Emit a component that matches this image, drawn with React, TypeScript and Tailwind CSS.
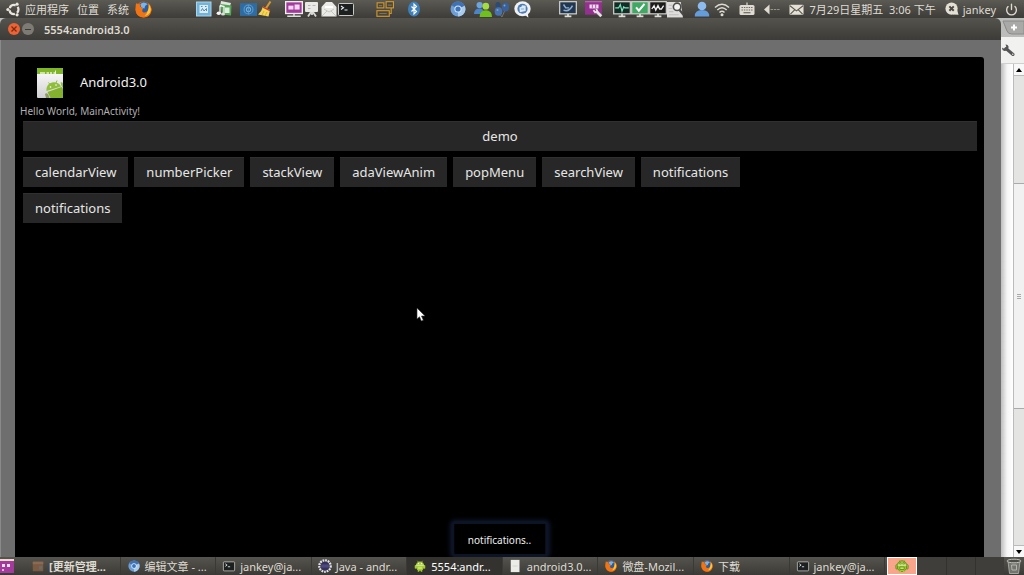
import type { ReactNode } from "react";
import { Power } from "lucide-react";

function Icon({ children, className = "h-4 w-4" }: { children: ReactNode; className?: string }) {
  return (
    <svg viewBox="0 0 16 16" className={`shrink-0 ${className}`} aria-hidden="true">
      {children}
    </svg>
  );
}

function UbuntuIcon() {
  return (
    <Icon className="h-[15px] w-[15px]">
      <circle cx="8.5" cy="8" r="4.8" fill="none" stroke="#e9e5dc" strokeWidth="2.4" strokeDasharray="7.6 2.45" strokeDashoffset="-6.3" />
      <circle cx="2" cy="8" r="1.7" fill="#e9e5dc" />
      <circle cx="11.8" cy="2.3" r="1.7" fill="#e9e5dc" />
      <circle cx="11.8" cy="13.7" r="1.7" fill="#e9e5dc" />
    </Icon>
  );
}

function FirefoxIcon({ className }: { className?: string }) {
  return (
    <Icon className={className}>
      <circle cx="8" cy="8" r="7.6" fill="#e66000" />
      <circle cx="8.4" cy="6.2" r="5.4" fill="#2c5c9e" />
      <path d="M5 3 Q8 0 12 3 Q9 4 9 7 L6 6 Z" fill="#7fb4e0" />
      <path d="M1 2 Q3 3 5 3 Q4 5 6 6 L8 7 Q6 8 7 10 Q10 12 12 9 Q14 6 12 2 Q16 5 15.5 9 Q14 15.6 8 15.6 Q1 15 .5 8 Q.5 4 1 2Z" fill="#ee7415" />
      <path d="M13 3 Q16 7 14 11 Q12 14 9 14 Q13 11 13 3Z" fill="#ffc83a" />
    </Icon>
  );
}

function ChromiumIcon({ className }: { className?: string }) {
  return (
    <Icon className={className}>
      <circle cx="8" cy="8" r="7.5" fill="#6d9fd6" />
      <path d="M8 8 L1.5 4.3 A7.5 7.5 0 0 1 14.7 4.8Z" fill="#3f72b4" />
      <path d="M8 8 L14.7 4.8 A7.5 7.5 0 0 1 8 15.5Z" fill="#a9cbed" />
      <circle cx="8" cy="8" r="3.6" fill="#dbe9f8" />
      <circle cx="8" cy="8" r="2.6" fill="#3c74bb" />
    </Icon>
  );
}

function TerminalIcon({ className }: { className?: string }) {
  return (
    <Icon className={className}>
      <rect x=".5" y="2.5" width="15" height="12" rx="1" fill="#1d2021" stroke="#c9c9c4" />
      <path d="M3 5 L5.5 6.8 L3 8.5 M6.5 9 H9.5" fill="none" stroke="#eee" strokeWidth="1.1" />
    </Icon>
  );
}

function AndroidIcon({ className }: { className?: string }) {
  return (
    <Icon className={className}>
      <path d="M4.5 1 L6 3 M11.5 1 L10 3" stroke="#8fbf2a" />
      <ellipse cx="8" cy="8.2" rx="5.6" ry="6.2" fill="#a4cc35" />
      <rect x="1" y="6.5" width="2" height="5" rx="1" fill="#a4cc35" />
      <rect x="13" y="6.5" width="2" height="5" rx="1" fill="#a4cc35" />
      <path d="M6 13 V15.5 M10 13 V15.5" stroke="#a4cc35" strokeWidth="2" />
      <path d="M3 7 H13" stroke="#f0f7dc" />
      <circle cx="6" cy="4.8" r=".9" fill="#fff" />
      <circle cx="10" cy="4.8" r=".9" fill="#fff" />
      <path d="M5.5 9 H10.5 V12 H5.5Z" fill="#c5e267" />
    </Icon>
  );
}

function WidgetIcon() {
  return (
    <Icon>
      <rect x=".5" y="1" width="14.5" height="14" fill="#73b4da" stroke="#a8d5ec" />
      <rect x="3.5" y="4" width="8.5" height="8" fill="#dcecf5" />
      <path d="M5 10 L6.5 7.5 L8 10 L10.5 7.5 V10 M5 5.5 H6.5 M9 5.5 H10.5" fill="none" stroke="#4d8fba" />
    </Icon>
  );
}

function MediaIcon() {
  return (
    <Icon>
      <path d="M5 0 L15 2 L14 5 L4 6Z" fill="#dfe6e0" />
      <path d="M4.5 3 L15.5 4.5 L15 14.5 L6 13.5Z" fill="#54a657" />
      <path d="M9 6.5 H13.5 V12 H9Z" fill="#dff0e0" />
      <path d="M4 4.5 V12 M4 4.5 L8 5.5 V12" fill="none" stroke="#f5f5f5" strokeWidth="1.3" />
      <ellipse cx="2.8" cy="12.3" rx="2.2" ry="1.7" fill="#f5f5f5" />
      <ellipse cx="7" cy="13" rx="2" ry="1.6" fill="#dcdcdc" />
    </Icon>
  );
}

function GlobeFlagIcon() {
  return (
    <Icon className="h-[17px] w-[17px]">
      <rect x="0" y="2" width="16" height="12" fill="#2e6da4" />
      <circle cx="8" cy="8" r="4.2" fill="none" stroke="#5f9bcd" />
      <circle cx="8" cy="8" r="2" fill="none" stroke="#79aedb" />
      <path d="M8 3.5 V12.5" stroke="#5f9bcd" strokeWidth=".7" />
    </Icon>
  );
}

function BroomIcon() {
  return (
    <Icon>
      <path d="M13.5 .5 L8.5 8" stroke="#d59a2f" strokeWidth="2" />
      <path d="M6 5.5 L13 9 L11.5 15.5 L1 13.5 Q5 10 6 5.5Z" fill="#f4d657" />
      <path d="M6 6.2 L13 9.7" stroke="#cf3b24" strokeWidth="1.5" />
      <path d="M7 10 L5 14 M10 11 L8 15" stroke="#c79c20" strokeWidth=".7" />
    </Icon>
  );
}

function PinkMonitorIcon() {
  return (
    <Icon className="h-[18px] w-[18px]">
      <rect x=".6" y="1.5" width="14.8" height="10.5" fill="#a23a9b" stroke="#eee" strokeWidth="1.2" />
      <rect x="3" y="5" width="4.5" height="3.5" fill="#f4d4f1" />
      <rect x="8.5" y="4" width="4.5" height="4.5" fill="#f4d4f1" />
      <path d="M8 12 V14.5 M2 14.5 H14" stroke="#dcdcdc" strokeWidth="1.3" />
    </Icon>
  );
}

function BoardIcon() {
  return (
    <Icon>
      <rect x="1" y="1" width="13" height="10" rx="1" fill="#e8e8e6" />
      <path d="M4 4.5 H6.5 M8.5 4.5 H11.5 M4 7.5 H6.5" stroke="#b5b5b1" strokeWidth="1.2" />
      <path d="M8 11 V14 M7 11 L4 15.5 M9 11 L12 15.5" stroke="#d6d6d3" strokeWidth="1.8" />
    </Icon>
  );
}

function OpenMailIcon() {
  return (
    <Icon>
      <path d="M.5 6 L5 1 H11 L15.5 6 V15.5 H.5Z" fill="#e9e9e6" />
      <path d="M3 8 L8 11 L13 8 M1 15 L6 10 M15 15 L10 10" fill="none" stroke="#c6c6c1" />
      <path d="M4 6 H12" stroke="#fff" strokeWidth="2" />
    </Icon>
  );
}

function BoxesIcon() {
  return (
    <Icon className="h-[18px] w-[18px]">
      <g fill="#4a453a" stroke="#d0982e">
        <rect x="1" y="2.5" width="6" height="4.5" />
        <rect x="9" y="1.5" width="6.5" height="5.5" />
        <rect x=".8" y="9.5" width="11" height="5" />
      </g>
      <path d="M13.5 7 V12 H12" fill="none" stroke="#d0982e" />
      <path d="M3 12 H9.5 M2.5 5 H5.5 M10.5 4.5 H14" stroke="#77736a" />
    </Icon>
  );
}

function BluetoothIcon() {
  return (
    <Icon>
      <ellipse cx="8" cy="8" rx="6" ry="7.6" fill="#3f80bb" />
      <path d="M5.5 5.5 L10.5 10.5 L8 13 V3 L10.5 5.5 L5.5 10.5" fill="none" stroke="#fff" strokeWidth="1.1" />
    </Icon>
  );
}

function BuddiesIcon() {
  return (
    <Icon className="h-[18px] w-[18px]">
      <circle cx="5" cy="4.5" r="2.8" fill="#6fa3dc" />
      <path d="M0 12.5 Q0 7.5 5 7.5 Q9 7.5 9 12.5Z" fill="#4b84c8" />
      <circle cx="10.5" cy="5.5" r="3" fill="#a2dd42" />
      <path d="M5 15 Q5 9 10.5 9 Q16 9 16 15Z" fill="#6fbf1d" />
    </Icon>
  );
}

function BalloonsIcon() {
  return (
    <Icon>
      <path d="M5 12 L8 16 M11 9 L8 16" stroke="#888" strokeWidth=".7" />
      <ellipse cx="4" cy="4" rx="2.5" ry="3" fill="#2d4a74" />
      <ellipse cx="11.5" cy="6" rx="3.6" ry="4.5" fill="#3a6099" />
      <ellipse cx="4.5" cy="10.5" rx="3.8" ry="4.3" fill="#4672ad" />
      <circle cx="10.5" cy="4.5" r="1" fill="#7ba4d6" />
      <circle cx="3.5" cy="9" r="1" fill="#7ba4d6" />
    </Icon>
  );
}

function ChatIcon() {
  return (
    <Icon className="h-[17px] w-[17px]">
      <ellipse cx="8" cy="7.3" rx="7.7" ry="7" fill="#eff1f3" />
      <path d="M9 12 L13.5 15.8 L13 11Z" fill="#eff1f3" />
      <circle cx="8" cy="7.3" r="4.8" fill="#4d7cb3" />
      <path d="M5 6 L7 5.5 L7.5 4 L11 4.5 V9.5 L5.5 10.5Z" fill="#dbe8f6" />
      <path d="M6.5 7.5 H9.5" stroke="#8fafd2" />
    </Icon>
  );
}

function Screen({ fill, children }: { fill: string; children: ReactNode }) {
  return (
    <Icon className="h-[18px] w-[18px]">
      <rect x=".6" y="1.5" width="14.8" height="10.8" fill={fill} stroke="#cfcfcb" strokeWidth="1.1" />
      <path d="M8 12.5 V14.5 M5 14.5 H11" stroke="#dededb" strokeWidth="1.5" />
      {children}
    </Icon>
  );
}

function PurpleToolIcon() {
  return (
    <Icon className="h-[18px] w-[18px]">
      <rect x="0" y="1" width="15" height="12" fill="#94308f" />
      <path d="M0 1.5 H15" stroke="#c069bb" />
      <rect x="4" y="4" width="8" height="3.5" fill="#f2dcf1" />
      <path d="M6.5 4 V7 M9.5 4 V7" stroke="#94308f" strokeWidth=".7" />
      <path d="M10 10 L14.5 14.5" stroke="#e3e3e3" strokeWidth="2.4" />
      <path d="M7.5 9 L9 11 L11 10 L10 8" fill="none" stroke="#e3e3e3" strokeWidth="1.5" />
    </Icon>
  );
}

function SearchDocIcon() {
  return (
    <Icon className="h-[17px] w-[17px]">
      <path d="M0 1 H13 L15 15.5 H0Z" fill="#dedddb" />
      <path d="M1.5 4 H5 M1.5 7 H5 M2 10 H6 M2 13 H11" stroke="#bdbdbb" />
      <circle cx="9.5" cy="5.5" r="3.5" fill="#f4f4f4" stroke="#4d4d4b" strokeWidth="1.5" />
      <path d="M11.8 8.5 L15.5 13" stroke="#474745" strokeWidth="2" />
    </Icon>
  );
}

function UserIcon() {
  return (
    <Icon>
      <circle cx="8" cy="5" r="4.3" fill="#8dbbee" />
      <path d="M.8 15.5 Q.5 9 8 9 Q15.5 9 15.2 15.5Z" fill="#659dda" />
    </Icon>
  );
}

function WifiIcon() {
  return (
    <Icon>
      <g fill="none" stroke="#dfdbd2" strokeWidth="1.5">
        <path d="M1 6.5 Q8 0 15 6.5" />
        <path d="M3.3 9 Q8 4.5 12.7 9" />
        <path d="M5.5 11.5 Q8 9 10.5 11.5" />
      </g>
      <circle cx="8" cy="13.7" r="1.5" fill="#dfdbd2" />
    </Icon>
  );
}

function KeyboardIcon() {
  return (
    <Icon>
      <path d="M8 1.5 V4" stroke="#dfdbd2" strokeWidth="1.2" />
      <rect x=".5" y="4" width="15" height="10" rx="1.5" fill="#dfdbd2" />
      <path d="M2.5 6.5 H13.5 M2.5 9 H13.5" stroke="#6b685f" strokeWidth="1.2" strokeDasharray="1.4 1" />
      <path d="M4.5 11.7 H11.5" stroke="#6b685f" strokeWidth="1.2" />
    </Icon>
  );
}

function SpeakerIcon() {
  return (
    <Icon>
      <path d="M0 8.5 L5.5 3.5 V13.5Z" fill="#dfdbd2" />
      <path d="M6.5 8.5 H16" stroke="#96938b" strokeDasharray="2.5 .8" />
    </Icon>
  );
}

function EnvelopeIcon() {
  return (
    <Icon className="h-[15px] w-[15px]">
      <rect x=".5" y="3" width="15" height="10.5" rx="1" fill="#e4e0d6" />
      <path d="M1 4 L8 9.5 L15 4 M1.5 13 L6 8.5 M14.5 13 L10 8.5" fill="none" stroke="#5a574f" strokeWidth="1.2" />
    </Icon>
  );
}

function StatusIcon() {
  return (
    <Icon className="h-[14px] w-[14px]">
      <circle cx="7.5" cy="7.5" r="7" fill="#e4e0d6" />
      <path d="M9 14.3 L15.5 14.5 L13.5 8Z" fill="#e4e0d6" />
      <path d="M5 5 L10 10 M10 5 L5 10" stroke="#4a4842" strokeWidth="2.2" />
    </Icon>
  );
}

function EclipseIcon() {
  return (
    <Icon className="h-[14px] w-[14px]">
      <circle cx="8" cy="8" r="6.5" fill="none" stroke="#e4e2ee" strokeWidth="2.6" strokeDasharray="2 1" />
      <circle cx="8" cy="8" r="5" fill="#353060" />
      <path d="M3.5 7 H12.5 M3.5 9 H12.5" stroke="#6d67a3" strokeWidth=".8" />
    </Icon>
  );
}

function PageIcon() {
  return (
    <Icon className="h-[14px] w-[14px]">
      <path d="M2 1 H12 V15 H2Z" fill="#ebebe8" />
      <path d="M4 8 H10" stroke="#d0d0cc" />
    </Icon>
  );
}

function PackageIcon() {
  return (
    <Icon className="h-[14px] w-[14px]">
      <rect x="2" y="3" width="12" height="11" rx="1" fill="#7b5a42" />
      <path d="M2 3 H14 V6 H2Z" fill="#8a6a52" />
      <rect x="9" y="8" width="4" height="4" fill="#6f6863" />
    </Icon>
  );
}

function TrashIcon() {
  return (
    <Icon>
      <path d="M2 3 H14 L12.5 15.5 H3.5Z" fill="#74746f" stroke="#a5a5a0" />
      <ellipse cx="8" cy="3" rx="7" ry="1.8" fill="#4c4c48" stroke="#c0c0bb" />
      <path d="M5.5 7 H10.5 V12 H6Z" fill="none" stroke="#b5b5af" />
    </Icon>
  );
}

function AppLogo() {
  return (
    <svg viewBox="0 0 26 30" className="h-[30px] w-[26px] shrink-0" aria-hidden="true">
      <defs>
        <linearGradient id="sheet" x1="0" y1="0" x2="0" y2="1">
          <stop offset="0" stopColor="#ffffff" />
          <stop offset="1" stopColor="#d0d0d0" />
        </linearGradient>
        <clipPath id="sheet-clip">
          <rect width="26" height="30" rx="1" />
        </clipPath>
      </defs>
      <g clipPath="url(#sheet-clip)">
        <rect width="26" height="30" fill="url(#sheet)" />
        <rect width="26" height="6" fill="#7fb629" />
        <path d="M3 5 H8 M9.5 5 H12 M13 5 H15 M16.5 5 H18" stroke="#e9f5d2" strokeWidth="1.6" />
        <path d="M18.5 2.5 V6" stroke="#e9f5d2" />
        <path d="M11.5 14.5 L13.5 17 M20 12.5 L19 15" stroke="#8dbb35" />
        <path d="M9.5 23 Q9 15.5 16 14.3 Q21.5 14 24 18.5Z" fill="#8fbf3a" />
        <path d="M10.5 24 L24.5 19 L26 20.5 V30 H13.5Z" fill="#83b32e" />
        <path d="M23.5 14.5 Q26 13.5 26 16 V20 L24.5 18Z" fill="#8fbf3a" />
        <circle cx="13.5" cy="19" r=".8" fill="#fff" />
        <circle cx="19" cy="17" r=".8" fill="#fff" />
        <path d="M8 26 Q10 24 11.5 27 L12.5 30 H9Z" fill="#8a9a62" />
      </g>
    </svg>
  );
}

function TopPanel() {
  return (
    <header className="flex h-[18px] shrink-0 items-center overflow-hidden bg-linear-to-b from-[#5b5a53] to-[#3d3c38] px-1.5 text-[11px] leading-none text-[#dfdbd2]">
      <nav className="flex items-center gap-2">
        <UbuntuIcon />
        <a href="#apps" className="-ml-1">应用程序</a>
        <a href="#places">位置</a>
        <a href="#system">系统</a>
        <FirefoxIcon className="-ml-0.5 h-[17px] w-[17px]" />
      </nav>
      <div className="ml-11 flex items-center gap-7">
        <div className="flex items-center gap-1">
          <WidgetIcon />
          <MediaIcon />
          <span className="ml-1 flex items-center">
            <GlobeFlagIcon />
            <BroomIcon />
          </span>
          <span className="ml-2 flex items-center gap-px">
            <PinkMonitorIcon />
            <BoardIcon />
            <OpenMailIcon />
            <TerminalIcon />
          </span>
        </div>
        <div className="-ml-1.5 flex items-center gap-3">
          <BoxesIcon />
          <BluetoothIcon />
        </div>
        <div className="flex items-center gap-1">
          <ChromiumIcon />
          <span className="ml-1 flex items-center gap-0.5">
            <BuddiesIcon />
            <BalloonsIcon />
          </span>
          <ChatIcon />
        </div>
        <div className="flex items-center gap-2">
          <Screen fill="#22364f">
            <path d="M4 9 Q9 11 12 5 M4 4 L6 7 H9" fill="none" stroke="#8fb0d2" strokeWidth="1.3" />
          </Screen>
          <PurpleToolIcon />
          <span className="ml-0.5 flex items-center">
            <Screen fill="#142c26">
              <path d="M2 7 H5 L6.5 4 L8 10 L9.5 6 L10.5 7 H14" fill="none" stroke="#7de5bd" />
            </Screen>
            <Screen fill="#3fa863">
              <path d="M4.5 6.5 L7 9.5 L12 3.5" fill="none" stroke="#fff" strokeWidth="1.8" />
            </Screen>
            <Screen fill="#1b1b1a">
              <path d="M2.5 8 L4.5 5 L6 9 L8 5 L9.5 8 H11 L13 5" fill="none" stroke="#efefef" strokeWidth="1.2" />
            </Screen>
            <SearchDocIcon />
          </span>
        </div>
      </div>
      <div className="ml-auto flex items-center gap-[9px]">
        <span className="flex items-center gap-1">
          <UserIcon />
          <WifiIcon />
        </span>
        <KeyboardIcon />
        <SpeakerIcon />
        <span className="flex items-center gap-[5px] whitespace-nowrap">
          <EnvelopeIcon />
          <time>7月29日星期五&nbsp; 3:06 下午</time>
        </span>
        <span className="flex items-center gap-1">
          <StatusIcon />
          jankey
        </span>
        <button type="button" aria-label="Power">
          <Power className="h-[13px] w-[13px]" strokeWidth={2.5} />
        </button>
      </div>
    </header>
  );
}

function TitleBar() {
  return (
    <div className="flex h-[22px] shrink-0 items-center gap-0.5 rounded-t-md bg-linear-to-b from-[#54534d] to-[#3c3b37] px-2 text-[#dfdbd2]">
      <button type="button" aria-label="Close" className="flex h-3 w-3 items-center justify-center rounded-full bg-[#ee6335]">
        <svg viewBox="0 0 8 8" className="h-2 w-2">
          <path d="M1.5 1.5 L6.5 6.5 M6.5 1.5 L1.5 6.5" stroke="#7a2b10" strokeWidth="1.3" />
        </svg>
      </button>
      <button type="button" aria-label="Minimize" className="flex h-3 w-3 items-center justify-center rounded-full bg-[#7d7b74]">
        <span className="h-px w-1.5 bg-[#3c3b37]" />
      </button>
      <h1 className="ml-2 text-[11px] leading-none font-semibold">5554:android3.0</h1>
    </div>
  );
}

function DemoButton({ label, wide = false }: { label: string; wide?: boolean }) {
  return (
    <button
      type="button"
      className={`h-[30px] border-t border-[#303030] bg-[#272727] px-3 text-[13px] leading-none text-[#e6e6e6] ${wide ? "w-full" : ""}`}
    >
      {label}
    </button>
  );
}

const demos = ["calendarView", "numberPicker", "stackView", "adaViewAnim", "popMenu", "searchView", "notifications"];

function EmulatorScreen() {
  return (
    <main className="relative flex-1 overflow-hidden rounded-t-[3px] bg-black">
      <div className="flex h-[46px] items-center gap-[17px] pt-1.5 pl-[22px]">
        <AppLogo />
        <h2 className="text-[13px] text-[#f0f0f0]">Android3.0</h2>
      </div>
      <p className="pl-[5px] text-[10px] leading-4 text-[#b0b0b0]">Hello World, MainActivity!</p>
      <div className="flex flex-col gap-1.5 pt-0.5 pr-[7px] pl-2">
        <DemoButton label="demo" wide />
        <div className="flex gap-1.5">
          {demos.map((d) => (
            <DemoButton key={d} label={d} />
          ))}
        </div>
        <div className="flex">
          <DemoButton label="notifications" />
        </div>
      </div>
      <svg viewBox="0 0 10 16" className="absolute top-[250px] left-[401px] h-4 w-2.5" aria-hidden="true">
        <path d="M1 1 V12 L3.5 9.8 L5.3 14 L7.3 13.2 L5.5 9 H9Z" fill="#fff" stroke="#333" strokeWidth=".6" />
      </svg>
      <div
        role="status"
        className="absolute bottom-0 left-1/2 -translate-x-1/2 rounded border-[3px] border-[#0d1426] bg-black px-3.5 pt-2 pb-1.5 text-[10px] leading-4 text-[#eeeeee] shadow-[0_0_4px_1px_#10182e]"
      >
        notifications..
      </div>
    </main>
  );
}

function BrowserEdge() {
  return (
    <aside className="flex w-[23px] shrink-0 flex-col bg-white">
      <div className="flex h-[19px] shrink-0 items-center justify-end bg-[#bcbcbb]">
        <button type="button" aria-label="New tab">
          <svg viewBox="0 0 22 16" className="h-4 w-[22px]">
            <path d="M1 1 H22 V14 H10 Q6 14 5 11Z" fill="#a9a9a8" stroke="#8a8a89" />
            <path d="M12 4.5 V10.5 M9 7.5 H15" stroke="#fff" strokeWidth="2" />
          </svg>
        </button>
      </div>
      <div className="flex h-[27px] shrink-0 items-center border-b border-[#d0d0d0] bg-[#f1f1f0]">
        <button type="button" aria-label="Settings">
          <svg viewBox="0 0 14 14" className="h-3.5 w-3.5">
            <path d="M5 5.5 L12 11.5" stroke="#555" strokeWidth="3" strokeLinecap="round" />
            <path d="M1 4.5 Q2.5 6 4.5 5 Q6 3.5 4.5 1.5 Q8 1.5 7.5 5 Q6 8.5 3.5 8 Q1 7.5 1 4.5Z" fill="#555" />
            <circle cx="11.8" cy="11.3" r=".7" fill="#eee" />
          </svg>
        </button>
      </div>
      <div className="flex flex-1">
        <div className="flex-1 bg-linear-to-r from-[#bdbdbd] via-[#f5f5f5] to-white" />
        <div className="flex w-[11px] flex-col border-l border-[#bbb] bg-[#e4e4e3] text-black">
          <button type="button" aria-label="Scroll up" className="flex h-3 items-center justify-center border-b border-[#bbb] bg-[#f8f8f8]">
            <svg viewBox="0 0 6 4" className="h-1 w-1.5"><path d="M0 4 L3 0 L6 4Z" /></svg>
          </button>
          <div className="grow-[109]" />
          <div className="flex grow-[223] flex-col items-center justify-center gap-px border-y border-[#aaa] bg-[#f1f1f1]">
            <span className="h-px w-1 bg-[#aaa]" />
            <span className="h-px w-1 bg-[#aaa]" />
            <span className="h-px w-1 bg-[#aaa]" />
          </div>
          <div className="grow-[138]" />
          <button type="button" aria-label="Scroll down" className="flex h-3 items-center justify-center border-t border-[#bbb] bg-[#f8f8f8]">
            <svg viewBox="0 0 6 4" className="h-1 w-1.5"><path d="M0 0 L3 4 L6 0Z" /></svg>
          </button>
        </div>
      </div>
    </aside>
  );
}

const tasks = [
  { title: "[更新管理...", icon: <PackageIcon />, bold: true },
  { title: "编辑文章 - ...", icon: <ChromiumIcon className="h-3 w-3.5" /> },
  { title: "jankey@ja...", icon: <TerminalIcon className="h-3 w-3.5" /> },
  { title: "Java - andr...", icon: <EclipseIcon /> },
  { title: "5554:andr...", icon: <AndroidIcon className="h-3 w-3.5" />, active: true },
  { title: "android3.0...", icon: <PageIcon /> },
  { title: "微盘-Mozil...", icon: <FirefoxIcon className="h-3 w-3.5" /> },
  { title: "下载", icon: <FirefoxIcon className="h-3 w-3.5" /> },
  { title: "jankey@ja...", icon: <TerminalIcon className="h-3 w-3.5" /> },
];

function Taskbar() {
  return (
    <footer className="flex h-[18px] shrink-0 items-stretch overflow-hidden bg-linear-to-b from-[#55544e] to-[#3b3a36] text-[11px] leading-none text-[#dfdbd2]">
      <button type="button" aria-label="Show desktop" className="flex w-[25px] items-center">
        <svg viewBox="0 0 14 16" className="h-4 w-3.5">
          <rect y="1" width="14" height="14" fill="#a33a9c" />
          <path d="M0 2 H14" stroke="#ecdccb" strokeWidth="2" />
          <rect x="2" y="6" width="3" height="3" fill="#f4dff2" />
          <rect x="7" y="6" width="3" height="3" fill="#f4dff2" />
          <rect x="2" y="11" width="2" height="2" fill="#e0b1dc" />
        </svg>
      </button>
      <nav className="flex flex-1">
        {tasks.map((t, i) => (
          <button
            key={i}
            type="button"
            className={`flex min-w-0 flex-1 items-center gap-1 border-r border-[#3a3935] pl-1.5 whitespace-nowrap ${t.active ? "bg-[#33322e] text-white" : ""} ${t.bold ? "font-bold" : ""}`}
          >
            {t.icon}
            {t.title}
          </button>
        ))}
      </nav>
      <div className="flex w-[119px] pl-0.5">
        <button type="button" aria-label="Workspace 1" className="flex flex-1 items-center justify-center border border-white bg-[#f9a58c]">
          <AndroidIcon className="h-[14px] w-[14px] stroke-[#5f8a1c]" />
        </button>
        <button type="button" aria-label="Workspace 2" className="flex-1 border-r border-[#33322f] bg-[#3f3e3a]" />
        <button type="button" aria-label="Workspace 3" className="flex-1 border-r border-[#33322f] bg-[#3f3e3a]" />
        <button type="button" aria-label="Workspace 4" className="flex-1 bg-[#3f3e3a]" />
      </div>
      <button type="button" aria-label="Trash" className="flex w-5 items-center justify-center">
        <TrashIcon />
      </button>
    </footer>
  );
}

export default function App() {
  return (
    <div className="flex h-screen flex-col overflow-hidden bg-[#3c3b37] font-['Noto_Sans','Noto_Sans_CJK_SC',sans-serif]">
      <TopPanel />
      <div className="flex min-h-0 flex-1 bg-[#bcbcbb]">
        <section className="flex min-w-0 flex-1 flex-col">
          <TitleBar />
          <div className="flex flex-1 border-l border-[#8a8a8a] bg-[#6e6e6e] pt-[17px] pr-[17px] pl-3.5">
            <EmulatorScreen />
          </div>
        </section>
        <BrowserEdge />
      </div>
      <Taskbar />
    </div>
  );
}
